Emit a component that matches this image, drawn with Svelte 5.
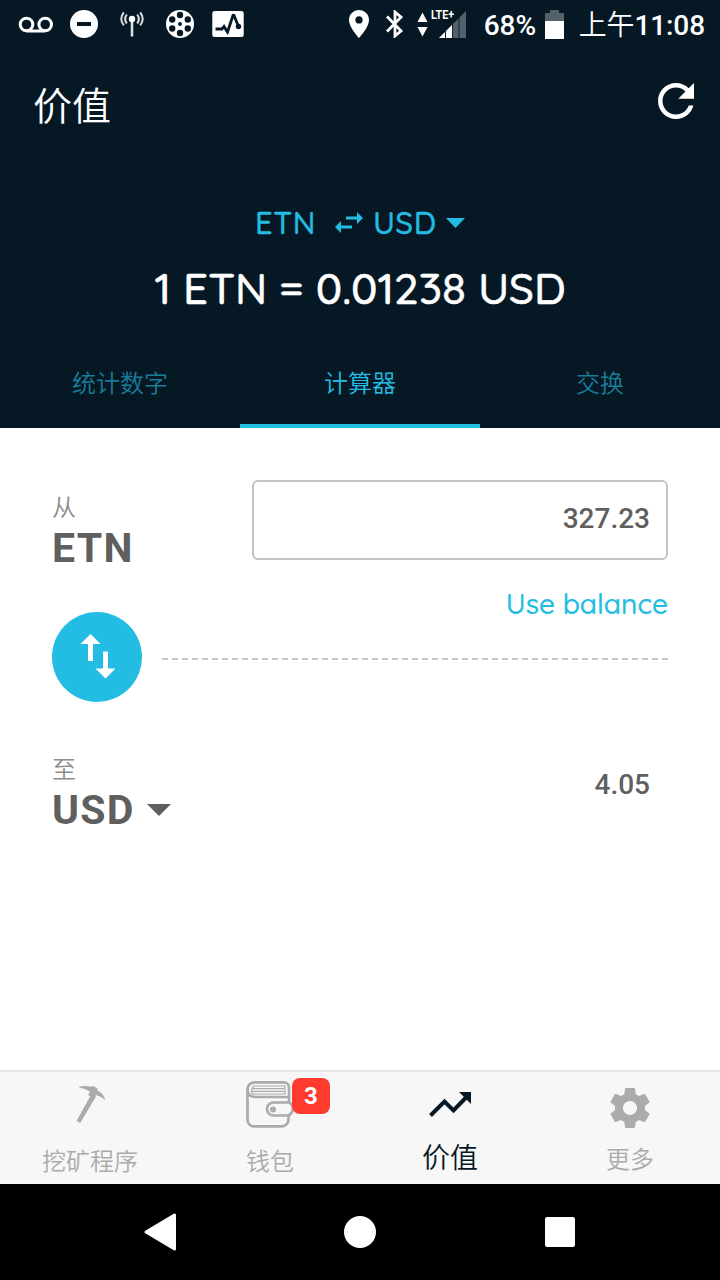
<script>
  let amount = $state("327.23");
  let activeTab = $state("calculator");

  const tabs = [
    { id: "stats", label: "统计数字" },
    { id: "calculator", label: "计算器" },
    { id: "exchange", label: "交换" },
  ];
</script>

<div class="screen">
  <header class="header">
    <div class="status-bar">
      <div class="notifications">
        <svg viewBox="0 0 48 48">
          <g fill="none" stroke="#fff" stroke-width="3">
            <circle cx="14.5" cy="24.5" r="6.3" />
            <circle cx="33.2" cy="24.5" r="6.3" />
            <path d="M14.5 31h18.7" />
          </g>
        </svg>
        <svg viewBox="0 0 48 48">
          <circle cx="24" cy="24" r="14" fill="#fff" />
          <path d="M17 24h14" stroke="#071825" stroke-width="4" />
        </svg>
        <svg viewBox="0 0 48 48">
          <g fill="none" stroke="#d9dfe2" stroke-width="2">
            <path d="M24 19v17.5" stroke-width="2.6" />
            <path d="M18.8 14.5q-3.4 4.5 0 9M15.8 12.3q-5 6.5 0 13M29.2 14.5q3.4 4.5 0 9M32.2 12.3q5 6.5 0 13" />
          </g>
          <circle cx="24" cy="19" r="3.2" fill="#fff" />
        </svg>
        <svg viewBox="0 0 48 48">
          <circle cx="24" cy="24" r="14" fill="#fff" />
          <g fill="#071825">
            <circle cx="24" cy="15" r="3.2" />
            <circle cx="24" cy="33" r="3.2" />
            <circle cx="16.2" cy="19.5" r="3.2" />
            <circle cx="31.8" cy="19.5" r="3.2" />
            <circle cx="16.2" cy="28.5" r="3.2" />
            <circle cx="31.8" cy="28.5" r="3.2" />
            <circle cx="24" cy="24" r="1.9" />
          </g>
        </svg>
        <svg viewBox="0 0 48 48">
          <rect x="8.3" y="11" width="31.4" height="26" rx="2.5" fill="#fff" />
          <path d="M11.5 29h6.500l2-2.500 3.500 5.500 5.500-16.500h1l4.500 11" fill="none" stroke="#071825" stroke-width="2.8" />
          <circle cx="34.5" cy="26.5" r="2.7" fill="#071825" />
        </svg>
      </div>

      <div class="indicators">
        <svg class="pin" viewBox="0 0 20 28">
          <path d="M10 0C4.4 0 0 4.4 0 9.9c0 7.3 10 18.1 10 18.1s10-10.8 10-18.1C20 4.4 15.6 0 10 0zm0 13.5a3.600 3.600 0 1 1 0-7.200 3.600 3.600 0 0 1 0 7.200z" fill="#fff" />
        </svg>
        <svg class="bluetooth" viewBox="0 0 20 28">
          <path d="M2 6.500l14 14.300-6 5.200V2l6 5.200L2 21.500" fill="none" stroke="#fff" stroke-width="2.800" />
        </svg>
        <svg class="network" viewBox="0 -4 50 40">
          <path d="M5.500 4.500l5 9.500h-10zM5.500 28.500l5-9.500h-10z" fill="#fff" />
          <path d="M49 3v27H22z" fill="#53616b" />
          <path d="M35 17v13H22z" fill="#fff" />
          <path d="M28.500 22v8M35.500 12v18M42 8v22" stroke="#14242f" stroke-width="1" />
          <text x="14" y="11" textLength="23" lengthAdjust="spacingAndGlyphs">LTE+</text>
        </svg>
        <span class="percent">68%</span>
        <svg class="battery" viewBox="0 0 19 29">
          <path d="M5 0h9v3h5v9H0V3h5z" fill="#53616b" />
          <path d="M0 11h19v18H0z" fill="#fff" />
        </svg>
        <span class="time"><span class="cjk">上午</span>11:08</span>
      </div>
    </div>

    <div class="title-bar">
      <h1>价值</h1>
      <button class="refresh" aria-label="刷新">
        <svg viewBox="4 4 16 16">
          <path d="M17.650 6.350C16.200 4.900 14.210 4 12 4c-4.420 0-7.990 3.580-7.990 8s3.570 8 7.990 8c3.730 0 6.840-2.550 7.730-6h-2.080c-.820 2.330-3.040 4-5.650 4-3.310 0-6-2.690-6-6s2.690-6 6-6c1.660 0 3.140.690 4.220 1.780L13 11h7V4l-2.350 2.350z" fill="#fff" />
        </svg>
      </button>
    </div>

    <div class="pair">
      <span class="from-code">ETN</span>
      <svg class="swap" viewBox="0 0 28 21">
        <path d="M11 4.400h11V0l6 6-6 6V7.600H11zM17 13.400H6V9l-6 6 6 6v-4.400h11z" fill="#23bde3" />
      </svg>
      <span class="to-code">USD</span>
      <svg class="caret" viewBox="0 0 19 10">
        <path d="M0 0h19l-9.500 10z" fill="#23bde3" />
      </svg>
    </div>
    <div class="rate">1 ETN = 0.01238 USD</div>

    <nav class="tabs">
      {#each tabs as tab}
        <button
          class="tab"
          class:active={activeTab === tab.id}
          onclick={() => (activeTab = tab.id)}
        >
          {tab.label}
        </button>
      {/each}
    </nav>
  </header>

  <main class="calculator">
    <div class="from-row">
      <div class="currency">
        <span class="label">从</span>
        <span class="code">ETN</span>
      </div>
      <input class="amount" bind:value={amount} />
    </div>
    <button class="use-balance">Use balance</button>

    <div class="divider">
      <button class="swap-button" aria-label="交换">
        <svg viewBox="0 0 36 46">
          <path d="M11.500 0l10 10H14v17H9V10H1.500zM26.500 44.500l-10-10H24v-17h5v17h7.500z" fill="#fff" />
        </svg>
      </button>
      <div class="dashes"></div>
    </div>

    <div class="to-row">
      <div class="currency">
        <span class="label">至</span>
        <span class="code">
          USD
          <svg viewBox="0 0 24 12"><path d="M0 0h24L12 12z" fill="#5f5f5f" /></svg>
        </span>
      </div>
      <span class="result">4.05</span>
    </div>
  </main>

  <nav class="bottom-nav">
    <div class="nav-item">
      <svg viewBox="0 0 48 52">
        <path d="M26 13L10.500 41l3.700 2L30 16.500z" fill="#ababab" />
        <path d="M13.300 6.500q6-1.200 12 .300l1.700-1 4.500 2.700v1.700q6.500 3.500 7.700 9.800-4.500-4-9.200-5l-2 3.200-5.700-3 1.500-3.700q-5-3.200-10.500-4z" fill="#ababab" />
      </svg>
      <span class="name">挖矿程序</span>
    </div>
    <div class="nav-item">
      <div class="badge-wrap">
        <svg viewBox="0 0 48 52">
          <g fill="none" stroke="#ababab" stroke-width="2.700">
            <path d="M43 22V7a5 5 0 0 0-5-4.600H8.500A7 7 0 0 0 1.500 9v31a6.500 6.500 0 0 0 7 6.400H35a7 7 0 0 0 7.500-7v-4" />
            <path d="M1.500 9q0 8 8 8H42" />
            <path d="M43 22.500H27.500a6.500 6.500 0 0 0 0 13H42q4-1 5-7-1-5-4-6z" />
            <path d="M39 6H8Q4 9.500 6.500 14H39zM6 8.700h32M6 11.400h32" stroke-width="1.200" />
          </g>
          <circle cx="27" cy="29.500" r="3" fill="#ababab" />
        </svg>
        <span class="badge">3</span>
      </div>
      <span class="name">钱包</span>
    </div>
    <div class="nav-item selected">
      <svg viewBox="0 0 48 52">
        <path d="M4.500 35.500l14-14 9 9L41 16.500" fill="none" stroke="#071825" stroke-width="4" />
        <path d="M33 12h12v12z" fill="#071825" />
      </svg>
      <span class="name">价值</span>
    </div>
    <div class="nav-item">
      <svg viewBox="0 0 48 52">
        <g transform="translate(0 4)">
          <path
            d="M38.860 25.950c.080-.640.140-1.290.140-1.950s-.060-1.310-.140-1.950l4.230-3.310c.380-.300.490-.840.240-1.280l-4-6.930c-.250-.430-.770-.610-1.220-.430l-4.980 2.010c-1.030-.790-2.160-1.460-3.380-1.970L29 4.840c-.090-.470-.500-.840-1-.840h-8c-.500 0-.910.370-.990.840l-.750 5.300c-1.220.510-2.350 1.170-3.380 1.970L9.900 10.100c-.450-.170-.970 0-1.220.430l-4 6.930c-.250.430-.140.970.240 1.280l4.220 3.310C9.060 22.690 9 23.340 9 24s.060 1.310.140 1.950l-4.220 3.310c-.380.300-.490.840-.240 1.280l4 6.930c.250.430.770.610 1.220.430l4.980-2.010c1.030.790 2.160 1.460 3.380 1.970l.750 5.300c.080.470.490.840.990.840h8c.500 0 .910-.370.990-.840l.750-5.300c1.220-.510 2.350-1.170 3.380-1.970l4.980 2.010c.450.170.970 0 1.220-.430l4-6.930c.250-.430.140-.970-.240-1.280l-4.220-3.310zM24 31c-3.870 0-7-3.130-7-7s3.130-7 7-7 7 3.130 7 7-3.130 7-7 7z"
            fill="#ababab"
          />
        </g>
      </svg>
      <span class="name more">更多</span>
    </div>
  </nav>

  <footer class="system-nav">
    <svg viewBox="0 0 40 40">
      <path d="M34.500 3v34L6 20z" fill="#fff" stroke="#fff" stroke-width="3" stroke-linejoin="round" />
    </svg>
    <svg viewBox="0 0 40 40"><circle cx="20" cy="20" r="16" fill="#fff" /></svg>
    <svg viewBox="0 0 40 40"><rect x="5" y="5" width="30" height="30" rx="2" fill="#fff" /></svg>
  </footer>
</div>

<style>
  :global(body) {
    margin: 0;
  }

  .screen {
    width: 720px;
    height: 1280px;
    display: flex;
    flex-direction: column;
    overflow: hidden;
    background-color: #fff;
    font-family: "Roboto", "Noto Sans CJK SC", sans-serif;
  }

  .screen * {
    box-sizing: border-box;
  }

  svg {
    display: block;
    flex: none;
  }

  button {
    border: none;
    padding: 0;
    background: none;
  }

  .header {
    height: 428px;
    display: flex;
    flex-direction: column;
    background-color: #071825;
    color: #fff;
  }

  .status-bar {
    height: 48px;
    display: flex;
    justify-content: space-between;
    padding: 0 16px 0 12px;
  }

  .notifications {
    display: flex;
  }

  .notifications svg {
    width: 48px;
    height: 48px;
  }

  .indicators {
    display: flex;
    align-items: center;
    font-size: 28px;
    font-weight: 500;
    line-height: 50px;
  }

  .pin,
  .bluetooth {
    width: 20px;
    height: 28px;
    margin-right: 16px;
  }

  .bluetooth {
    margin-right: 12px;
  }

  .network {
    width: 50px;
    height: 40px;
    margin-right: 17px;
    overflow: visible;
  }

  .network text {
    fill: #fff;
    font-size: 13px;
    font-weight: 700;
    line-height: 1;
  }

  .percent {
    width: 52px;
    padding-top: 3px;
  }

  .battery {
    width: 19px;
    height: 29px;
    margin: 0 15px 0 9px;
  }

  .time {
    display: flex;
    padding-top: 3px;
    margin-right: -1px;
    letter-spacing: -0.1px;
  }

  .cjk {
    font-family: "Noto Sans CJK SC", sans-serif;
    font-weight: 350;
    line-height: 44px;
  }

  .title-bar {
    height: 112px;
    display: flex;
    justify-content: space-between;
    align-items: center;
    padding: 0 26px 0 33px;
  }

  h1 {
    margin: 0 0 2px;
    font: 350 39px/60px "Noto Sans CJK SC", sans-serif;
  }

  .refresh svg {
    width: 36px;
    height: 36px;
    margin-bottom: 6px;
  }

  .pair {
    height: 46px;
    margin-top: 40px;
    display: flex;
    align-items: center;
    padding-left: 255px;
    color: #23bde3;
    font: 500 31px/46px "Quicksand", "Lato", sans-serif;
    letter-spacing: 0.6px;
    -webkit-text-stroke: 0.4px currentColor;
  }

  .from-code {
    width: 80px;
  }

  .swap {
    width: 28px;
    height: 21px;
    margin-bottom: 2px;
  }

  .to-code {
    width: 73px;
    margin-left: 10px;
  }

  .caret {
    width: 19px;
    height: 10px;
  }

  .rate {
    height: 64px;
    margin-top: 10px;
    text-align: center;
    font: 500 44px/64px "Quicksand", "Lato", sans-serif;
    -webkit-text-stroke: 0.6px currentColor;
  }

  .tabs {
    display: flex;
    height: 90px;
    margin-top: auto;
  }

  .tab {
    flex: 1;
    padding-top: 2px;
    border-bottom: 4px solid transparent;
    color: #187d99;
    font: 350 24px/80px "Noto Sans CJK SC", sans-serif;
  }

  .tab.active {
    color: #23bde3;
    border-bottom-color: #23bde3;
  }

  .calculator {
    flex: 1;
    display: flex;
    flex-direction: column;
    padding: 52px 52px 0;
    color: #5f5f5f;
  }

  .from-row,
  .to-row {
    display: flex;
    justify-content: space-between;
  }

  .currency {
    display: flex;
    flex-direction: column;
    padding-top: 10px;
  }

  .label {
    color: #8c8c8c;
    font: 350 24px/34px "Noto Sans CJK SC", sans-serif;
    margin: -1px 0 1px;
  }

  .code {
    display: flex;
    align-items: center;
    gap: 12px;
    font-size: 41px;
    font-weight: 700;
    line-height: 48px;
    letter-spacing: 1.3px;
  }

  .code svg {
    width: 24px;
    height: 12px;
  }

  .amount {
    width: 416px;
    height: 80px;
    padding: 0 16px 3px 0;
    border: 2px solid #c4c4c4;
    border-radius: 6px;
    outline: none;
    background-color: #fff;
    color: #5f5f5f;
    text-align: right;
    font: 500 28px "Roboto", sans-serif;
  }

  .use-balance {
    align-self: flex-end;
    height: 40px;
    margin-top: 12px;
    color: #23bde3;
    font: 500 28px/40px "Quicksand", "Lato", sans-serif;
    -webkit-text-stroke: 0.2px currentColor;
  }

  .divider {
    display: flex;
    align-items: center;
    gap: 20px;
    margin-top: -12px;
  }

  .swap-button {
    width: 90px;
    height: 90px;
    display: flex;
    align-items: center;
    justify-content: center;
    border-radius: 50%;
    background-color: #23bde3;
  }

  .swap-button svg {
    width: 36px;
    height: 46px;
  }

  .dashes {
    flex: 1;
    height: 2px;
    margin-top: 4px;
    background: repeating-linear-gradient(90deg, #c4c4c4 0 6px, transparent 6px 10px);
  }

  .to-row {
    margin-top: 40px;
    padding-right: 18px;
  }

  .result {
    padding-top: 12px;
    font-size: 28px;
    font-weight: 500;
    line-height: 62px;
  }

  .bottom-nav {
    height: 114px;
    display: flex;
    border-top: 2px solid #e6e6e6;
    background-color: #f7f7f7;
  }

  .nav-item {
    width: 180px;
    display: flex;
    flex-direction: column;
    align-items: center;
    padding-top: 8px;
    color: #ababab;
  }

  .nav-item svg {
    width: 48px;
    height: 52px;
  }

  .name {
    font: 350 24px/40px "Noto Sans CJK SC", sans-serif;
    margin-top: 8px;
  }

  .name.more {
    margin-top: 6px;
  }

  .selected .name {
    margin-top: 4px;
    color: #071825;
    font-size: 28px;
  }

  .badge-wrap {
    position: relative;
  }

  .badge {
    position: absolute;
    left: 46px;
    top: -2px;
    width: 38px;
    height: 36px;
    border-radius: 8px;
    background-color: #ff3b30;
    color: #fff;
    text-align: center;
    font-size: 24px;
    font-weight: 700;
    line-height: 36px;
  }

  .system-nav {
    height: 96px;
    display: flex;
    justify-content: center;
    align-items: center;
    gap: 160px;
    background-color: #000;
  }

  .system-nav svg {
    width: 40px;
    height: 40px;
  }
</style>
